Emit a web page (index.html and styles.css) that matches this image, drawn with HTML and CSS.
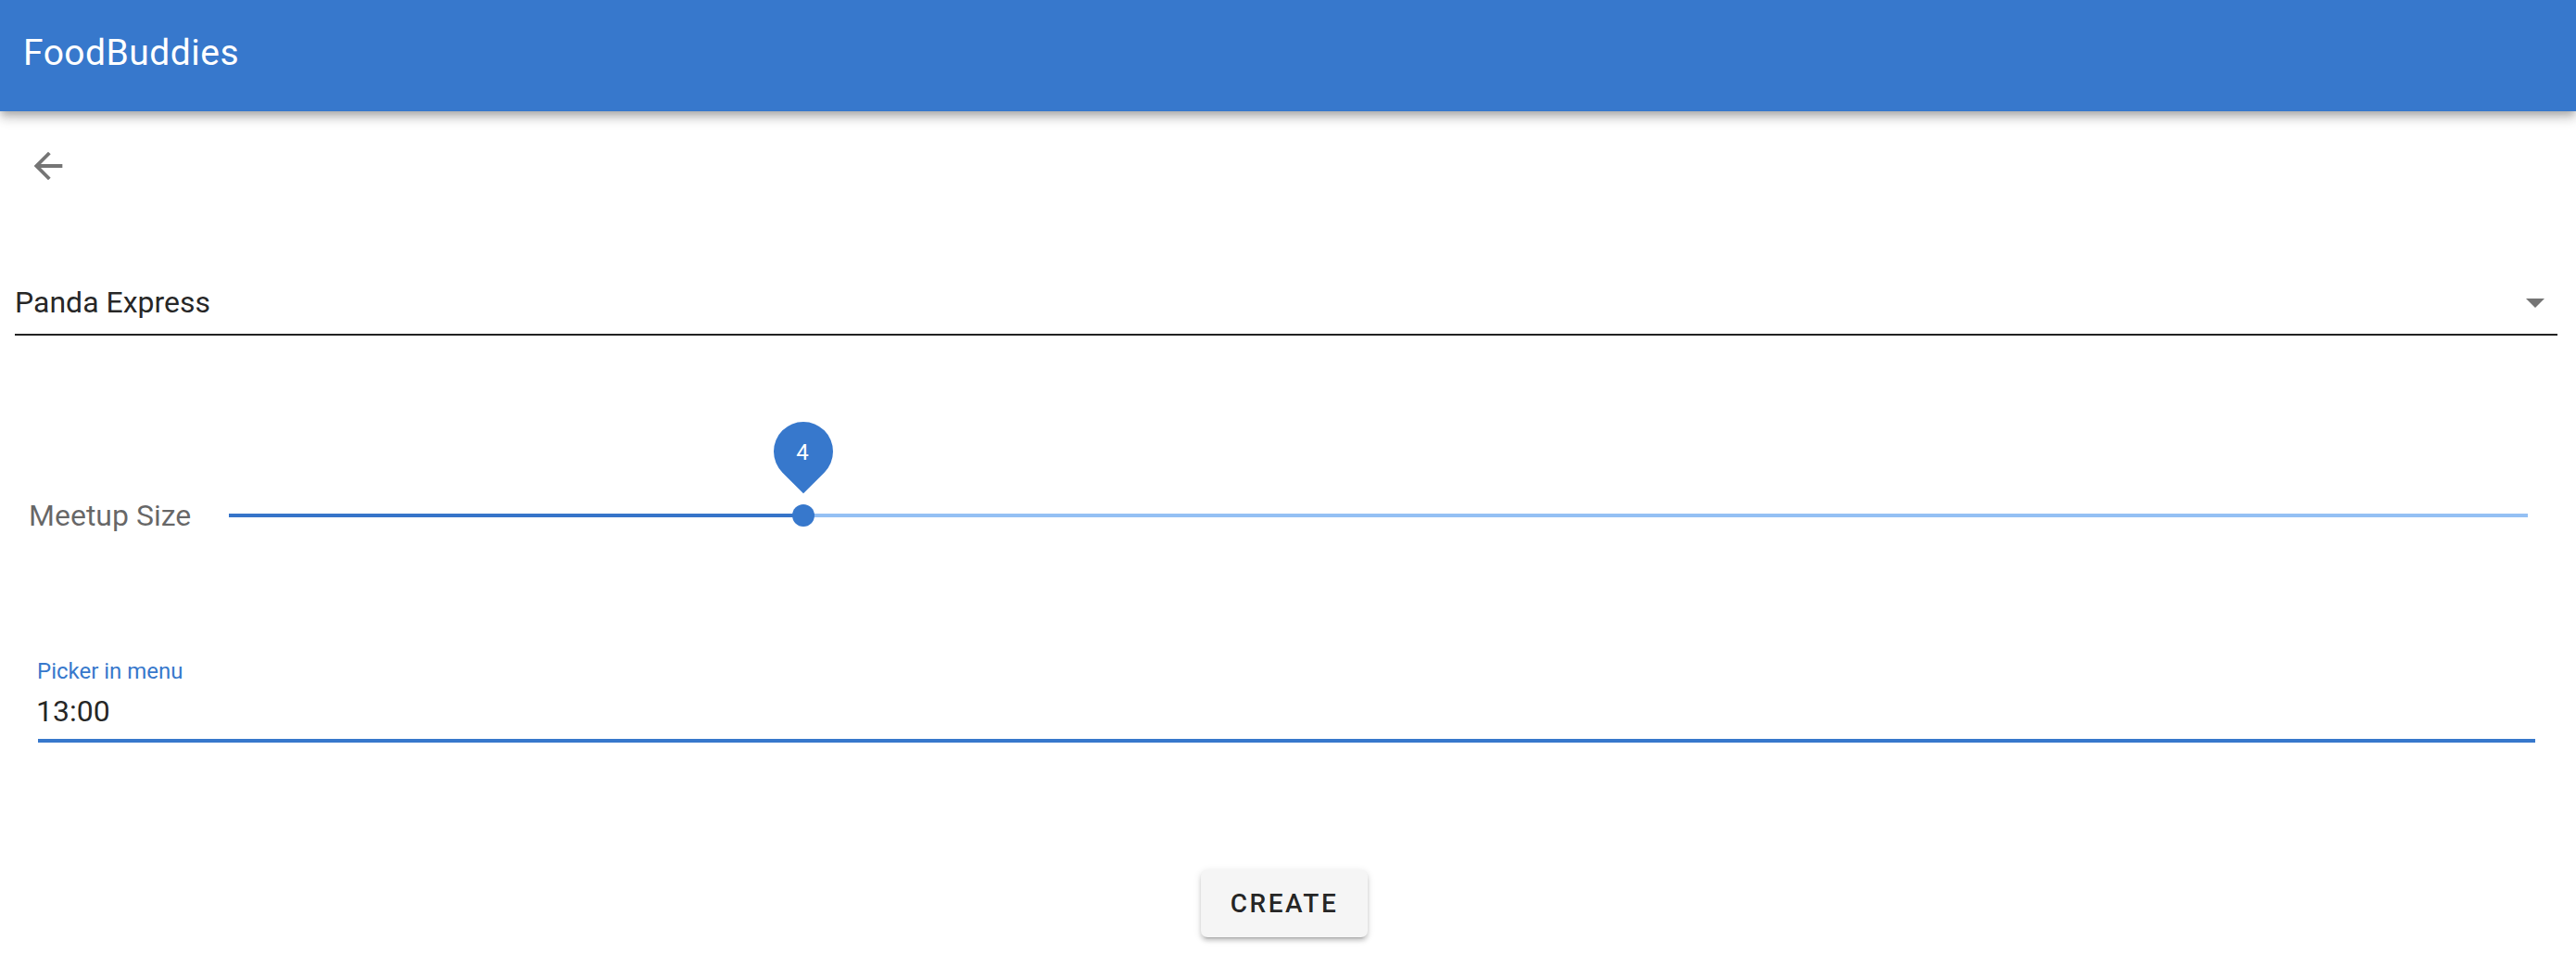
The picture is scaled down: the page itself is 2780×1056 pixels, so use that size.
FILE: index.html
```html
<!DOCTYPE html>
<html lang="en">
<head>
<meta charset="utf-8">
<title>FoodBuddies</title>
<link rel="stylesheet" href="styles.css">
</head>
<body>
<header class="appbar">
  <div class="appbar-title">FoodBuddies</div>
</header>
<main class="main">
  <div class="back-row">
    <button class="icon-btn" aria-label="Back">
      <svg viewBox="0 0 24 24" class="icon"><path d="M20 11H7.83l5.59-5.59L12 4l-8 8 8 8 1.41-1.41L7.83 13H20v-2z"/></svg>
    </button>
  </div>
  <div class="select">
    <span class="select-value">Panda Express</span>
    <span class="select-caret"></span>
  </div>
  <div class="slider-row">
    <label class="slider-label">Meetup Size</label>
    <div class="slider">
      <div class="track-fill" style="width:25%"></div>
      <div class="thumb-wrap" style="left:25%">
        <div class="thumb-label"><span>4</span></div>
        <div class="thumb"></div>
      </div>
    </div>
  </div>
  <div class="field">
    <div class="field-label">Picker in menu</div>
    <div class="field-value">13:00</div>
  </div>
  <div class="actions">
    <button class="btn">CREATE</button>
  </div>
</main>
</body>
</html>
```
FILE: styles.css
```css
* { box-sizing: border-box; }
html, body { margin: 0; padding: 0; background: #fff; }
body {
  font-family: Roboto, "Noto Sans", "Liberation Sans", sans-serif;
  color: rgba(0,0,0,0.87);
  width: 2780px;
  height: 1056px;
  overflow: hidden;
}
.appbar {
  height: 120px;
  background: #3778cc;
  display: flex;
  align-items: center;
  padding: 0 0 6px 25px;
  box-shadow: 0 4px 8px -2px rgba(0,0,0,.2), 0 8px 10px 0 rgba(0,0,0,.14), 0 2px 19px 0 rgba(0,0,0,.12);
  position: relative;
  z-index: 2;
}
.appbar-title {
  color: #fff;
  font-size: 39px;
  font-weight: 400;
  letter-spacing: 0.0125em;
}
.main {
  padding: 0 20px 0 16px;
}
.back-row {
  padding: 36px 0 0 13px;
  height: 82px;
}
.icon-btn {
  border: 0;
  background: none;
  padding: 0;
  margin: 0;
  width: 46px;
  height: 46px;
  display: block;
  cursor: pointer;
}
.icon {
  width: 46px;
  height: 46px;
  fill: #757575;
  display: block;
}
.select {
  margin-top: 106px;
  display: flex;
  align-items: center;
  padding-bottom: 16px;
  border-bottom: 2px solid #222;
}
.select-value {
  font-size: 32px;
  line-height: 36px;
  color: rgba(0,0,0,0.87);
}
.select-caret {
  margin-left: auto;
  margin-right: 14px;
  width: 0;
  height: 0;
  border-left: 10px solid transparent;
  border-right: 10px solid transparent;
  border-top: 10px solid #757575;
  margin-top: 2px;
}
.slider-row {
  margin-top: 162px;
  height: 64px;
  display: flex;
  align-items: center;
}
.slider-label {
  font-size: 32px;
  line-height: 36px;
  color: rgba(0,0,0,0.6);
  padding-left: 15px;
  width: 231px;
  flex: none;
  white-space: nowrap;
}
.slider {
  flex: 1;
  margin-right: 32px;
  height: 4px;
  background: #94c0f4;
  position: relative;
}
.track-fill {
  height: 4px;
  background: #3674c9;
}
.thumb-wrap {
  position: absolute;
  top: 2px;
  width: 0;
  height: 0;
}
.thumb {
  position: absolute;
  width: 24px;
  height: 24px;
  border-radius: 50%;
  background: #3778cc;
  left: -12px;
  top: -12px;
}
.thumb-label {
  position: absolute;
  width: 64px;
  height: 64px;
  left: -32px;
  top: -101px;
  background: #3778cc;
  border-radius: 50% 50% 0 50%;
  transform: rotate(45deg);
  display: flex;
  align-items: center;
  justify-content: center;
}
.thumb-label span {
  transform: rotate(-45deg);
  color: #fff;
  font-size: 24px;
  line-height: 24px;
  margin-top: 2px;
}
.field {
  margin: 123px 24px 0 25px;
  border-bottom: 4px solid #3778cc;
  padding-bottom: 12px;
}
.field-label {
  font-size: 24px;
  line-height: 26px;
  color: #3778cc;
  margin-left: -1px;
}
.field-value {
  margin-top: 12px;
  font-size: 32px;
  line-height: 36px;
  color: rgba(0,0,0,0.87);
  margin-left: -2px;
}
.actions {
  margin-top: 137px;
  display: flex;
  justify-content: center;
}
.btn {
  height: 73px;
  padding: 0 32px;
  border: 0;
  border-radius: 7px;
  background: #f5f5f5;
  font-family: Roboto, "Noto Sans", "Liberation Sans", sans-serif;
  font-size: 28px;
  font-weight: 500;
  letter-spacing: 0.0892em;
  color: rgba(0,0,0,0.87);
  box-shadow: 0 5px 2px -4px rgba(0,0,0,.2), 0 4px 4px 0 rgba(0,0,0,.14), 0 2px 9px 0 rgba(0,0,0,.12);
  margin-left: -4px;
  cursor: pointer;
}
```
